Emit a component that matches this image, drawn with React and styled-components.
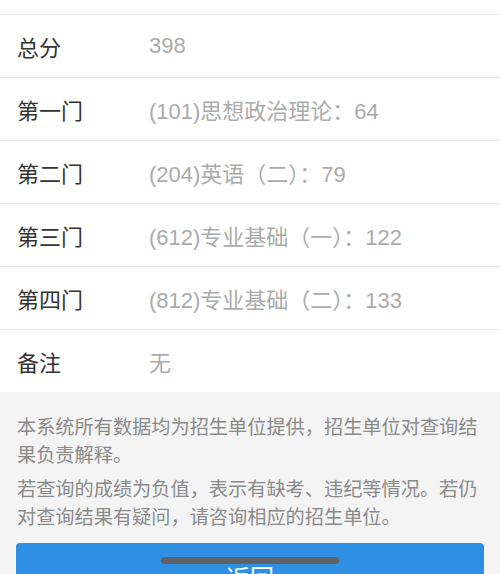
import React from 'react';
import styled, { createGlobalStyle } from 'styled-components';

const GlobalStyle = createGlobalStyle`
  html, body {
    margin: 0;
    padding: 0;
    background: #f4f4f4;
    font-family: "Liberation Sans", "Noto Sans CJK SC", sans-serif;
  }
`;

const rows = [
  { label: '总分', value: '398' },
  { label: '第一门', value: '(101)思想政治理论：64' },
  { label: '第二门', value: '(204)英语（二）：79' },
  { label: '第三门', value: '(612)专业基础（一）：122' },
  { label: '第四门', value: '(812)专业基础（二）：133' },
  { label: '备注', value: '无' },
];

function App() {
  return (
    <Page>
      <GlobalStyle />
      <Table>
        <TopStub />
        {rows.map((r) => (
          <Row key={r.label}>
            <Label>{r.label}</Label>
            <Value>{r.value}</Value>
          </Row>
        ))}
      </Table>
      <Notice>
        <p>本系统所有数据均为招生单位提供，招生单位对查询结果负责解释。</p>
        <p>若查询的成绩为负值，表示有缺考、违纪等情况。若仍对查询结果有疑问，请咨询相应的招生单位。</p>
        <BackButton>返回</BackButton>
      </Notice>
      <HomeBar />
    </Page>
  );
}

const Page = styled.div`
  width: 500px;
  height: 574px;
  overflow: hidden;
  position: relative;
  background: #f4f4f4;
`;

const Table = styled.div`
  background: #fff;
`;

const TopStub = styled.div`
  height: 14px;
`;

const Row = styled.div`
  display: flex;
  align-items: center;
  height: 62px;
  border-top: 1px solid #ebebeb;
  font-size: 22px;
`;

const Label = styled.div`
  width: 132px;
  padding-left: 17px;
  color: #333;
`;

const Value = styled.div`
  color: #ababab;
`;

const Notice = styled.div`
  padding: 22px 16px 0 17px;

  p {
    margin: 0 0 6px;
    font-size: 19.2px;
    line-height: 28px;
    color: #8a8a8a;
  }
`;

const BackButton = styled.div`
  margin-top: 11px;
  margin-left: -1px;
  height: 56px;
  border-radius: 4px;
  background: #2e8fe3;
  color: #fff;
  font-size: 24px;
  display: flex;
  align-items: center;
  justify-content: center;
  padding-top: 10px;
  box-sizing: border-box;
`;

const HomeBar = styled.div`
  position: absolute;
  left: 161px;
  top: 557px;
  width: 178px;
  height: 7px;
  border-radius: 4px;
  background: #5e6166;
`;

export default App;
